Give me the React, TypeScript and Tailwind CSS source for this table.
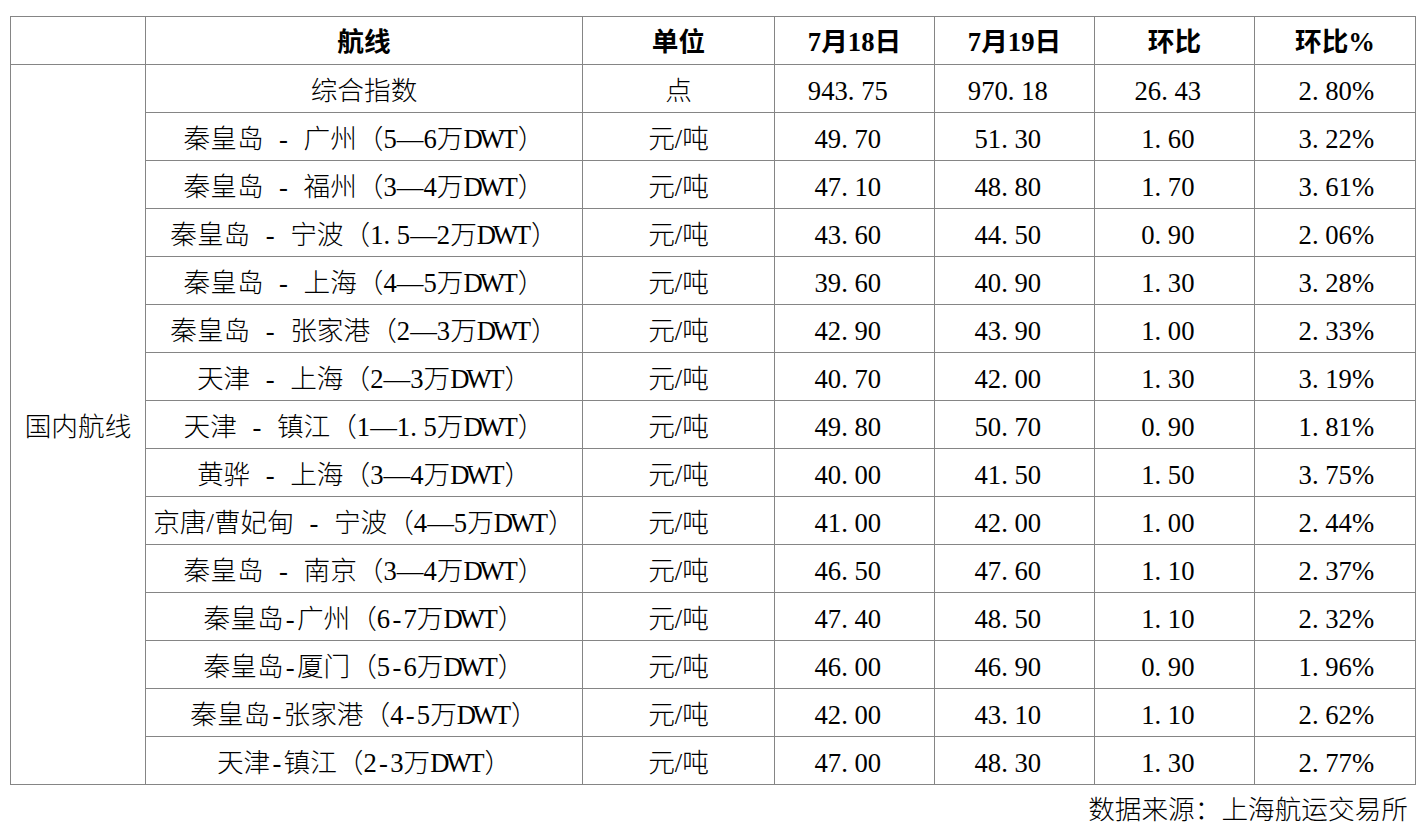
import React from "react";

type Row = { route: string; unit: string; d18: string; d19: string; diff: string; pct: string };

const rows: Row[] = [
  { route: "综合指数", unit: "点", d18: "943.75", d19: "970.18", diff: "26.43", pct: "2.80%" },
  { route: "秦皇岛 - 广州（5—6万DWT）", unit: "元/吨", d18: "49.70", d19: "51.30", diff: "1.60", pct: "3.22%" },
  { route: "秦皇岛 - 福州（3—4万DWT）", unit: "元/吨", d18: "47.10", d19: "48.80", diff: "1.70", pct: "3.61%" },
  { route: "秦皇岛 - 宁波（1.5—2万DWT）", unit: "元/吨", d18: "43.60", d19: "44.50", diff: "0.90", pct: "2.06%" },
  { route: "秦皇岛 - 上海（4—5万DWT）", unit: "元/吨", d18: "39.60", d19: "40.90", diff: "1.30", pct: "3.28%" },
  { route: "秦皇岛 - 张家港（2—3万DWT）", unit: "元/吨", d18: "42.90", d19: "43.90", diff: "1.00", pct: "2.33%" },
  { route: "天津 - 上海（2—3万DWT）", unit: "元/吨", d18: "40.70", d19: "42.00", diff: "1.30", pct: "3.19%" },
  { route: "天津 - 镇江（1—1.5万DWT）", unit: "元/吨", d18: "49.80", d19: "50.70", diff: "0.90", pct: "1.81%" },
  { route: "黄骅 - 上海（3—4万DWT）", unit: "元/吨", d18: "40.00", d19: "41.50", diff: "1.50", pct: "3.75%" },
  { route: "京唐/曹妃甸 - 宁波（4—5万DWT）", unit: "元/吨", d18: "41.00", d19: "42.00", diff: "1.00", pct: "2.44%" },
  { route: "秦皇岛 - 南京（3—4万DWT）", unit: "元/吨", d18: "46.50", d19: "47.60", diff: "1.10", pct: "2.37%" },
  { route: "秦皇岛-广州（6-7万DWT）", unit: "元/吨", d18: "47.40", d19: "48.50", diff: "1.10", pct: "2.32%" },
  { route: "秦皇岛-厦门（5-6万DWT）", unit: "元/吨", d18: "46.00", d19: "46.90", diff: "0.90", pct: "1.96%" },
  { route: "秦皇岛-张家港（4-5万DWT）", unit: "元/吨", d18: "42.00", d19: "43.10", diff: "1.10", pct: "2.62%" },
  { route: "天津-镇江（2-3万DWT）", unit: "元/吨", d18: "47.00", d19: "48.30", diff: "1.30", pct: "2.77%" },
];

function Txt({ s, trail }: { s: string; trail?: boolean }) {
  const parts = s.split(/(\.|DWT| |-|%)/).filter((p) => p !== "");
  return (
    <>
      {parts.map((p, i) =>
        p === "." ? (
          <span key={i} className="inline-block w-[0.5em] text-left">.</span>
        ) : p === " " ? (
          <span key={i} className="inline-block w-[0.5em]"></span>
        ) : p === "-" ? (
          <span key={i} className="inline-block w-[0.5em] text-center">-</span>
        ) : p === "%" ? (
          <span key={i} className="tracking-[-0.1em]">%</span>
        ) : p === "DWT" ? (
          <span key={i} className="tracking-[-0.12em] pr-[0.12em]">DWT</span>
        ) : (
          <React.Fragment key={i}>{p}</React.Fragment>
        )
      )}
      {trail && <span className="inline-block w-[0.5em]"></span>}
    </>
  );
}

const cell = "border border-[#858585] text-center align-middle p-0 pt-[5px] whitespace-nowrap";
const hcell = "border border-[#858585] text-center align-middle p-0 pt-[3px] whitespace-nowrap";

export default function App() {
  return (
    <div
      className="w-[1424px] h-[832px] bg-white text-black text-[26.67px] leading-none pt-[16px]"
      style={{ fontFamily: '"Liberation Serif", "Noto Sans CJK SC", serif' }}
    >
      <table className="ml-[10px] w-[1405px] table-fixed border-collapse">
        <colgroup>
          <col className="w-[135px]" />
          <col className="w-[437px]" />
          <col className="w-[192px]" />
          <col className="w-[160px]" />
          <col className="w-[160px]" />
          <col className="w-[160px]" />
          <col className="w-[161px]" />
        </colgroup>
        <thead>
          <tr className="h-[48px] font-bold">
            <th className={hcell}></th>
            <th className={hcell}>航线</th>
            <th className={hcell}>单位</th>
            <th className={hcell}>7月18日</th>
            <th className={hcell}>7月19日</th>
            <th className={hcell}>环比</th>
            <th className={hcell}>环比%</th>
          </tr>
        </thead>
        <tbody className="font-light">
          {rows.map((r, i) => (
            <tr key={i} className="h-[48px]">
              {i === 0 && (
                <td className={cell} rowSpan={rows.length}>
                  国内航线
                </td>
              )}
              <td className={cell}>
                <Txt s={r.route} />
              </td>
              <td className={cell}>{r.unit}</td>
              <td className={cell}>
                <Txt s={r.d18} trail />
              </td>
              <td className={cell}>
                <Txt s={r.d19} trail />
              </td>
              <td className={cell}>
                <Txt s={r.diff} trail />
              </td>
              <td className={cell}>
                <Txt s={r.pct} />
              </td>
            </tr>
          ))}
        </tbody>
      </table>
      <div className="mt-[12px] pr-[16px] text-right font-light">数据来源：上海航运交易所</div>
    </div>
  );
}
